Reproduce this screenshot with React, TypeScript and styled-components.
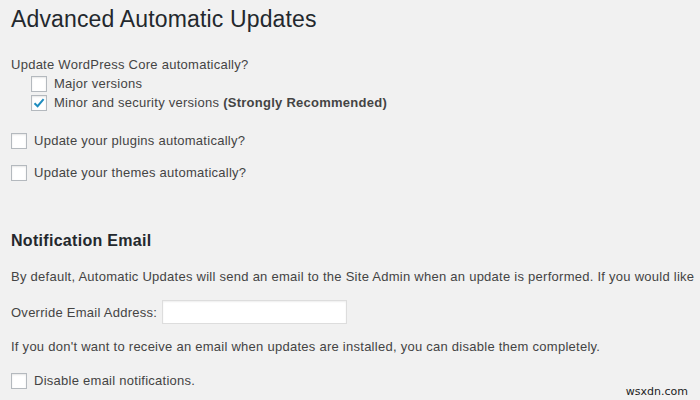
import React from "react";
import styled, { createGlobalStyle } from "styled-components";

const Global = createGlobalStyle`
  html, body { margin: 0; padding: 0; background: #f1f1f1; }
  body { font-family: "Liberation Sans", Arial, sans-serif; color: #444; overflow: hidden; }
`;

const Page = styled.div`
  width: 700px;
  height: 400px;
  padding: 0 0 0 11px;
  box-sizing: border-box;
  position: relative;
  overflow: hidden;
`;

const Title = styled.h1`
  margin: 0;
  padding-top: 5px;
  font-size: 23px;
  font-weight: 400;
  line-height: 29px;
  letter-spacing: 0.15px;
  color: #23282d;
`;

const Text = styled.p<{ $mt?: number }>`
  margin: ${(p) => p.$mt ?? 0}px 0 0 0;
  font-size: 13px;
  line-height: 19px;
  letter-spacing: 0.26px;
  white-space: nowrap;
  color: #444;
`;

const Indented = styled.div`
  display: flex;
  flex-direction: column;
  padding-left: 20px;
`;

const Row = styled.label<{ $mt?: number }>`
  display: flex;
  align-items: center;
  gap: 7px;
  margin-top: ${(p) => p.$mt ?? 0}px;
  font-size: 13px;
  line-height: 19px;
  letter-spacing: 0.26px;
  color: #444;
  white-space: nowrap;
`;

const Box = styled.span`
  width: 16px;
  height: 16px;
  box-sizing: border-box;
  border: 1px solid #b4b9be;
  background: #fff;
  box-shadow: inset 0 1px 2px rgba(0, 0, 0, 0.1);
  display: inline-flex;
  align-items: center;
  justify-content: center;
  flex: none;
`;

const Heading = styled.h2`
  margin: 49px 0 0 0;
  font-size: 16px;
  font-weight: 700;
  line-height: 20px;
  letter-spacing: 0.3px;
  color: #23282d;
`;

const FieldRow = styled.div`
  display: flex;
  align-items: center;
  gap: 5px;
  margin-top: 14px;
  font-size: 13px;
  letter-spacing: 0.26px;
  color: #444;
`;

const Input = styled.input`
  width: 185px;
  height: 24px;
  box-sizing: border-box;
  border: 1px solid #ddd;
  background: #fff;
  box-shadow: inset 0 1px 2px rgba(0, 0, 0, 0.07);
  margin: 0;
  padding: 0 4px;
  outline: none;
`;

const Watermark = styled.span`
  position: absolute;
  right: 12px;
  bottom: 2px;
  font-family: "DejaVu Sans", sans-serif;
  font-size: 11px;
  color: #222;
`;

const Check = ({ checked }: { checked?: boolean }) => (
  <Box>
    {checked && (
      <svg width="14" height="14" viewBox="0 0 14 14">
        <path d="M2.5 7.2 L5.6 10.2 L11.6 3.2" fill="none" stroke="#1e8cbe" strokeWidth="2" />
      </svg>
    )}
  </Box>
);

export default function App() {
  return (
    <>
      <Global />
      <Page>
        <Title>Advanced Automatic Updates</Title>
        <Text $mt={21}>Update WordPress Core automatically?</Text>
        <Indented>
          <Row><Check />Major versions</Row>
          <Row><Check checked /><span>Minor and security versions <b>(Strongly Recommended)</b></span></Row>
        </Indented>
        <Row $mt={19}><Check />Update your plugins automatically?</Row>
        <Row $mt={13}><Check />Update your themes automatically?</Row>
        <Heading>Notification Email</Heading>
        <Text $mt={16}>By default, Automatic Updates will send an email to the Site Admin when an update is performed. If you would like</Text>
        <FieldRow>Override Email Address: <Input type="text" /></FieldRow>
        <Text $mt={13}>If you don't want to receive an email when updates are installed, you can disable them completely.</Text>
        <Row $mt={15}><Check />Disable email notifications.</Row>
        <Watermark>wsxdn.com</Watermark>
      </Page>
    </>
  );
}
